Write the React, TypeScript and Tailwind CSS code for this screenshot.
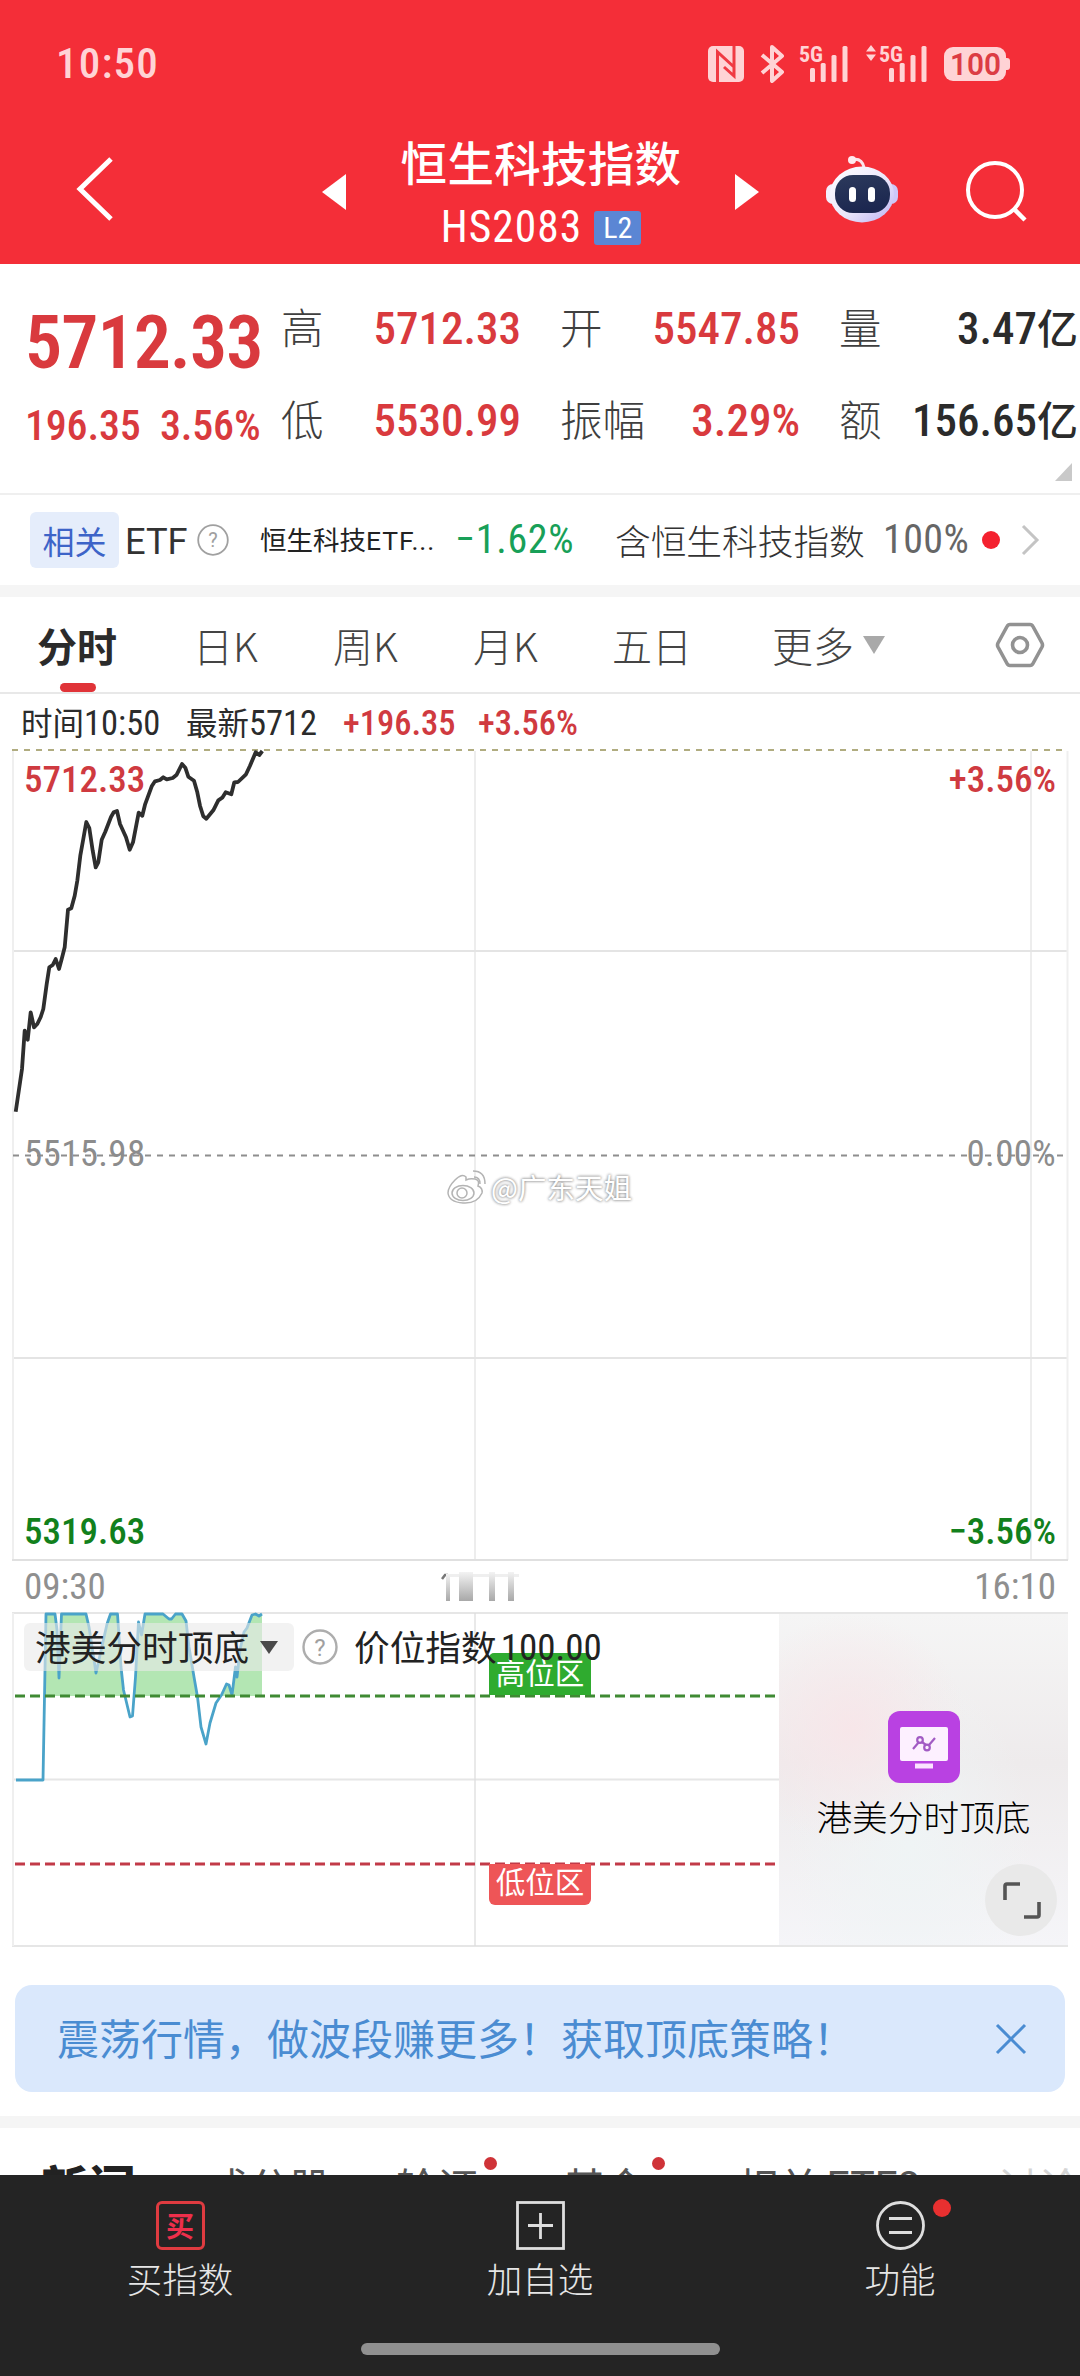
import React from 'react';

const PRICE_POINTS =
  '15.7,1112.7 22,1070 24.7,1031.7 27.7,1040.7 30.7,1013.3 34,1028.3 37.3,1025 40.7,1018 43.3,1010 46.7,985 49.3,968.3 52.7,966 55.7,960 59,970 61.7,960 64.7,948.3 68,910.7 71.3,909.3 74.7,896.7 77.3,881.7 80.3,856.7 83.3,840 86.3,823 89.3,829 92.7,851.7 95.7,868.3 98.3,863.3 101.7,840.7 105.3,832.7 111,818 113.7,813.3 117,812 120,825 126,838.3 129.7,850.7 133,843.3 138.7,813.7 142.3,816.7 145,805.7 151.7,787.3 155,782.3 160,781 163.3,778.3 166.7,780.3 172.7,779 176.7,775.7 182,765 185.3,768.7 188.3,777.7 194,781.7 197.3,793.3 200,806.7 203.3,817.3 206.3,819.7 213.3,811.3 218.3,801.3 222.3,798.7 225.7,793.3 231.3,795.3 234.3,783.3 238,783 246,775.3 250,766.7 255.7,753.3 259.3,756 262.3,752';

const INDEX_POINTS =
  '16,1780 43,1780 46,1614 55,1614 57,1630 59,1678 61,1627 61.5,1614 86,1614 89,1627 96,1673 107,1624 110.5,1614 117.5,1614 121,1667 123.5,1690 130,1717 132.5,1716 135.5,1677 138.5,1622 141.5,1635 145,1614 163,1614 169,1619 171.5,1619 175.5,1614 182,1614 186,1621 189,1647 194,1677 197.5,1697 201,1727 206,1744 210,1723 216,1703 221.5,1695 226.5,1684 229,1685 232,1695 235.5,1667 237,1677 240,1650 244,1632 247,1628 252,1615 255.5,1614 259,1616 262,1614';

const QUOTES = [
  [
    { label: '高', value: '5712.33', unit: '', up: true },
    { label: '低', value: '5530.99', unit: '', up: true },
  ],
  [
    { label: '开', value: '5547.85', unit: '', up: true },
    { label: '振幅', value: '3.29%', unit: '', up: true },
  ],
  [
    { label: '量', value: '3.47', unit: '亿', up: false },
    { label: '额', value: '156.65', unit: '亿', up: false },
  ],
];

const NEWS_TABS = [
  { name: '成分股', latin: '', width: 'w-[191px]', dot: false },
  { name: '轮证', latin: '', width: 'w-[170px]', dot: true },
  { name: '基金', latin: '', width: 'w-[176px]', dot: true },
  { name: '相关', latin: 'ETF8', width: 'w-[264px]', dot: false },
];

const SignalBars = () => (
  <svg width="38" height="38" viewBox="0 0 38 38" fill="#ffd3d5">
    <rect x="0" y="23" width="5" height="14" rx="1.5" />
    <rect x="10.7" y="18" width="5" height="19" rx="1.5" />
    <rect x="21.5" y="10" width="5" height="27" rx="1.5" />
    <rect x="32.5" y="1" width="5" height="36" rx="1.5" />
  </svg>
);

const StatusBar = () => (
  <div className="flex h-[127px] items-center text-[#ffd3d5]">
    <span className="ml-[56px] w-[652px] text-[43px] leading-none font-medium tracking-[1.2px] font-['Roboto_Condensed']">
      10:50
    </span>
    <svg width="36" height="36" viewBox="0 0 36 36">
      <rect width="36" height="36" rx="5" fill="#ffd3d5" />
      <path d="M9.5 36V6L26 21M26 0v30L16 21" fill="none" stroke="#f03a43" strokeWidth="3" />
    </svg>
    <svg className="ml-[16px]" width="26" height="38" viewBox="0 0 26 38">
      <path d="M2 10l20 17-10 9V2l10 9L2 28" fill="none" stroke="#ffd3d5" strokeWidth="4" strokeLinejoin="round" />
    </svg>
    <div className="relative ml-[24px] flex">
      <span className="absolute -top-[1px] -left-[11px] text-[22px] leading-none font-bold font-['Roboto_Condensed']">5G</span>
      <SignalBars />
    </div>
    <svg className="ml-[18px] mb-[22px]" width="10" height="16" viewBox="0 0 10 16" fill="#ffd3d5">
      <path d="M5 0l5 6.500H0zM5 16l5-6.500H0z" />
    </svg>
    <div className="relative ml-[13px] flex">
      <span className="absolute -top-[1px] -left-[10px] text-[22px] leading-none font-bold font-['Roboto_Condensed']">5G</span>
      <SignalBars />
    </div>
    <div className="ml-[17px] flex h-[34px] w-[62px] items-center justify-center rounded-[9px] bg-[#ffd3d5] text-[32px] leading-none font-semibold text-[#dc3c44] font-['Roboto']">
      <span className="scale-x-[0.93]">100</span>
    </div>
    <div className="h-[12px] w-[4px] rounded-r-[3px] bg-[#ffd3d5]" />
  </div>
);

const Robot = () => (
  <svg width="74" height="70" viewBox="0 0 74 70">
    <defs>
      <linearGradient id="shell" x1="0" y1="0" x2="1" y2="1">
        <stop offset="0" stopColor="#ffffff" />
        <stop offset="0.55" stopColor="#ebe7fb" />
        <stop offset="1" stopColor="#b9b0f2" />
      </linearGradient>
      <linearGradient id="visor" x1="0" y1="0" x2="0.3" y2="1">
        <stop offset="0" stopColor="#2c3a5c" />
        <stop offset="1" stopColor="#1c2750" />
      </linearGradient>
    </defs>
    <path d="M27 4.500q10-2 12 8" fill="none" stroke="#fbe3ea" strokeWidth="3" />
    <circle cx="27" cy="5" r="4" fill="#ffe9ee" />
    <rect x="1" y="29" width="14" height="20" rx="7" fill="#f3effd" />
    <rect x="59" y="29" width="14" height="20" rx="7" fill="#cdc7f8" />
    <ellipse cx="37" cy="39.500" rx="32" ry="28" fill="url(#shell)" />
    <rect x="10" y="20" width="55" height="38" rx="18" fill="url(#visor)" />
    <rect x="24" y="32" width="7" height="15" rx="3.5" fill="#fff" />
    <rect x="43" y="32" width="7" height="15" rx="3.5" fill="#fff" />
  </svg>
);

const Header = () => (
  <div className="flex h-[137px] text-white">
    <svg className="mt-[30px] ml-[76px]" width="38" height="64" viewBox="0 0 38 64">
      <path d="M35 2L4 32l31 30" fill="none" stroke="#fff" strokeWidth="5" />
    </svg>
    <svg className="mt-[47px] ml-[208px]" width="25" height="36" viewBox="0 0 25 36">
      <path d="M24 0v36L0 18z" fill="#fff" />
    </svg>
    <div className="flex w-[388px] flex-col items-center">
      <span className="mt-[6px] text-[46.5px] leading-[56px] font-medium tracking-[0.3px]">恒生科技指数</span>
      <div className="mt-[15px] flex items-center gap-[12px]">
        <span className="text-[43.5px] leading-[48px] tracking-[1px] font-['Roboto_Condensed']">HS2083</span>
        <span className="flex h-[34px] w-[47px] items-center justify-center rounded-[3px] bg-[#5b86d4] text-[30px] leading-none font-['Roboto_Condensed']">
          L2
        </span>
      </div>
    </div>
    <svg className="mt-[47px]" width="25" height="36" viewBox="0 0 25 36">
      <path d="M0 0v36l24-18z" fill="#fff" />
    </svg>
    <div className="mt-[28px] ml-[65px]">
      <Robot />
    </div>
    <svg className="mt-[32px] ml-[66px]" width="64" height="64" viewBox="0 0 64 64">
      <circle cx="30" cy="31" r="27" fill="none" stroke="#fff" strokeWidth="4" />
      <path d="M49 50l11 11" stroke="#fff" strokeWidth="4.500" />
    </svg>
  </div>
);

const QuotePanel = () => (
  <div className="relative flex h-[231px] border-b-2 border-[#efefef] font-medium text-[#d93a3e] font-['Roboto_Condensed','Noto_Sans_CJK_SC',sans-serif]">
    <div className="w-[281px] pl-[25px]">
      <div className="mt-[39px] h-[80px] text-[74px] leading-[80px] font-semibold tracking-[-1px]">5712.33</div>
      <div className="mt-[15px] flex h-[56px] gap-[25px] text-[42px] leading-[56px] tracking-[-0.2px] whitespace-nowrap">
        <span className="w-[110px]">196.35</span>
        <span>3.56%</span>
      </div>
    </div>
    <div className="flex gap-[39px] pt-[36px]">
      {QUOTES.map((col, i) => (
        <div key={i} className="flex w-[240px] flex-col gap-[36px] last:w-[239px]">
          {col.map(q => (
            <div key={q.label} className="flex h-[56px] justify-between text-[45px] leading-[56px] whitespace-nowrap">
              <span className="-mt-[2px] text-[42.5px] font-light text-[#3f3f3f] font-['Noto_Sans_CJK_SC']">{q.label}</span>
              <span className={q.up ? 'pt-[1px]' : 'pt-[1px] text-[#2b2b2b]'}>
                {q.value}
                {q.unit && <span className="text-[41px] leading-none">{q.unit}</span>}
              </span>
            </div>
          ))}
        </div>
      ))}
    </div>
    <svg className="absolute right-[8px] bottom-[12px]" width="17" height="18" viewBox="0 0 17 18">
      <path d="M17 0v18H0z" fill="#c9c9c9" />
    </svg>
  </div>
);

const EtfRow = () => (
  <div className="flex h-[91px] items-center pl-[30px] whitespace-nowrap">
    <span className="flex h-[56px] w-[89px] items-center justify-center rounded-[6px] bg-[#e5edfb] text-[32px] leading-none text-[#3d64c8]">
      相关
    </span>
    <span className="ml-[6px] w-[71px] pt-[3px] text-[37px] text-[#333] font-['Roboto']">
      <span className="inline-block origin-left scale-x-[0.98]">ETF</span>
    </span>
    <svg className="ml-[1px]" width="32" height="32" viewBox="0 0 32 32">
      <circle cx="16" cy="16" r="14.800" fill="none" stroke="#a0a0a0" strokeWidth="1.800" />
      <text x="16" y="23" textAnchor="middle" fontSize="20" fill="#a0a0a0" fontFamily="Roboto">?</text>
    </svg>
    <span className="ml-[31px] w-[195px] text-[26.5px] text-[#222]">
      恒生科技<span className="tracking-[0.9px] font-['Roboto']">ETF...</span>
    </span>
    <span className="w-[160px] text-[40px] tracking-[0.7px] text-[#18a058] font-['Roboto_Condensed']">−1.62%</span>
    <span className="w-[268px] text-[35.7px] font-light text-[#333]">含恒生科技指数</span>
    <span className="w-[99px] text-[40px] tracking-[0.4px] text-[#666] font-['Roboto_Condensed']">100%</span>
    <span className="size-[18px] shrink-0 rounded-full bg-[#f4212f]" />
    <svg className="ml-[20px]" width="20" height="32" viewBox="0 0 20 32">
      <path d="M3 2l14 14L3 30" fill="none" stroke="#c4c4c4" strokeWidth="3" />
    </svg>
  </div>
);

const PeriodTabs = () => (
  <div className="relative flex h-[97px] items-center border-b-2 border-[#e8e8e8] pl-[37px] text-[39px] font-light whitespace-nowrap text-[#444]">
    <span className="w-[156px] text-[40px] font-bold text-[#2b2b2b]">分时</span>
    <span className="w-[140px] text-[40px]">日K</span>
    <span className="w-[140px] text-[40px]">周K</span>
    <span className="w-[139px] text-[40px]">月K</span>
    <span className="w-[160px] text-[40px]">五日</span>
    <span className="w-[90px] text-[41px]">更多</span>
    <svg width="24" height="18" viewBox="0 0 24 18">
      <path d="M1 0h22L12 18z" fill="#a9a9a9" />
    </svg>
    <svg className="ml-[109px]" width="50" height="46" viewBox="0 0 50 46">
      <path
        d="M15 2.500h20q2 0 3 2l9 16.500q1 2 0 4L38 41.500q-1 2-3 2H15q-2 0-3-2L3 25q-1-2 0-4L12 4.500q1-2 3-2z"
        fill="none"
        stroke="#929292"
        strokeWidth="3.600"
      />
      <circle cx="25" cy="23" r="7.500" fill="none" stroke="#929292" strokeWidth="3.600" />
    </svg>
    <div className="absolute bottom-0 left-[60px] h-[9px] w-[36px] rounded-full bg-[#e03338]" />
  </div>
);

const PriceChart = () => (
  <div className="relative h-[918px] font-['Roboto_Condensed','Noto_Sans_CJK_SC',sans-serif]">
    <div className="flex h-[56px] items-center pt-[4px] pl-[21px] text-[34.5px] whitespace-nowrap text-[#2b2b2b]">
      <span className="w-[165px]">
        <span className="text-[31.5px]">时间</span>10:50
      </span>
      <span className="w-[157px]">
        <span className="text-[31.5px]">最新</span>5712
      </span>
      <span className="w-[135px] font-medium text-[#d03a40]">+196.35</span>
      <span className="font-medium text-[#d03a40]">+3.56%</span>
    </div>
    {/* y axis runs from the day's band high to band low */}
    <svg className="absolute top-[54px] left-0" width="1080" height="812" viewBox="0 749 1080 812">
      <g stroke="#e4e4e4" strokeWidth="2">
        <path d="M13 952h1054M13 1359h1054" />
        <path d="M475 752v810M1031 752v810" strokeWidth="1.300" />
        <path d="M13 752v810M1067.500 752v810" stroke="#efefef" />
      </g>
      <path d="M12 751h1052" stroke="#b0ac80" strokeWidth="2" strokeDasharray="6 6" />
      <path d="M13 1156.500h1050" stroke="#8e8e8e" strokeWidth="2.200" strokeDasharray="6 6" />
      <polyline points={PRICE_POINTS} fill="none" stroke="#2e2e2e" strokeWidth="3.800" strokeLinejoin="round" />
    </svg>
    <div className="relative mx-[12px] flex h-[811px] flex-col justify-between border-b-2 border-[#e0e0e0] px-[12px] pt-[2px] text-[37px] leading-[56px]">
      <div className="flex justify-between font-medium text-[#cf3a40]">
        <span>5712.33</span>
        <span>+3.56%</span>
      </div>
      <div className="-mt-[4px] flex justify-between tracking-[0.3px] text-[#8c8c8c]">
        <span>5515.98</span>
        <span>0.00%</span>
      </div>
      <div className="-mb-[1px] flex justify-between font-medium text-[#12801c]">
        <span>5319.63</span>
        <span>−3.56%</span>
      </div>
    </div>
    <div className="mx-[12px] flex h-[51px] items-center justify-between px-[12px] text-[37px] text-[#8f8f8f]">
      <span>09:30</span>
      <svg className="mr-[114px] -mt-[2px]" width="84" height="30" viewBox="0 0 84 30">
        <defs>
          <linearGradient id="smear" x1="0" y1="0" x2="0" y2="1">
            <stop offset="0" stopColor="#f3f3f3" />
            <stop offset="1" stopColor="#a8a8a8" />
          </linearGradient>
        </defs>
        <path d="M1 8l3-4h3" fill="none" stroke="#777" strokeWidth="2.500" />
        <path d="M6 4.500h72" stroke="#efefef" strokeWidth="3" />
        <g fill="url(#smear)">
          <rect x="5" y="3" width="4" height="27" />
          <rect x="18" y="1" width="14" height="29" />
          <rect x="48" y="1" width="6" height="29" />
          <rect x="67" y="1" width="6" height="29" />
        </g>
      </svg>
      <span>16:10</span>
    </div>
    <div className="absolute top-[471px] left-[446px] flex h-[44px] items-center gap-[3px]">
      <svg width="42" height="38" viewBox="0 0 42 38" fill="#fff" stroke="#b4b4b4" strokeWidth="1.500">
        <path d="M20 9q-4-4-11 3T2 25q1 9 15 10t19-10q1-5-4-7 2-6-3-7t-9 1z" />
        <ellipse cx="17" cy="25" rx="11" ry="7.500" />
        <circle cx="16" cy="25" r="5" />
        <path d="M27 3q12 0 12 13M28 9q6 0 6 7" fill="none" />
      </svg>
      <span className="text-[28.5px] text-white [text-shadow:0_0_3px_#8f8f8f,0_0_3px_#a5a5a5] font-['Noto_Sans_CJK_SC']">
        @广东天姐
      </span>
    </div>
  </div>
);

const IndexChart = () => (
  <div className="mx-[12px] flex h-[335px] border-y-2 border-[#e6e6e6]">
    <div className="relative w-[767px]">
      <svg className="absolute top-[-2px] left-0" width="767" height="334" viewBox="12 1612 767 334">
        <defs>
          <clipPath id="high-zone">
            <rect x="12" y="1612" width="767" height="84" />
          </clipPath>
        </defs>
        <path d="M12 1779.500h767" stroke="#e6e6e6" strokeWidth="2" />
        <path d="M475 1613v333" stroke="#dedede" strokeWidth="1.300" />
        <path d="M13 1613v333" stroke="#efefef" strokeWidth="2" />
        <polygon
          points={INDEX_POINTS + ' 262,1696 44,1696 44,1780'}
          fill="#b3e6b3"
          clipPath="url(#high-zone)"
        />
        <polyline points={INDEX_POINTS} fill="none" stroke="#4aa3c9" strokeWidth="2.800" strokeLinejoin="round" />
        <path d="M15 1696h764" stroke="#3f8a33" strokeWidth="3" strokeDasharray="10 5" />
        <path d="M15 1864h764" stroke="#c23a48" strokeWidth="3" strokeDasharray="10 5" />
      </svg>
      <div className="absolute top-[39px] left-[477px] flex h-[42px] w-[102px] items-center justify-center rounded-t-[5px] bg-[#2fab2f] pb-[5px] text-[29.5px] leading-none text-white">
        高位区
      </div>
      <div className="absolute top-[250px] left-[477px] flex h-[41px] w-[102px] items-center justify-center rounded-b-[6px] bg-[#ee5557] pb-[7px] text-[29.5px] leading-none text-white">
        低位区
      </div>
      <div className="relative mt-[9px] flex h-[48px] items-center pl-[12px] whitespace-nowrap text-[#222]">
        <div className="flex h-[48px] w-[270px] items-center gap-[11px] rounded-[6px] bg-[#e9e9e9]/60 pl-[11px] text-[35.7px] leading-none">
          <span className="pb-[3px]">港美分时顶底</span>
          <svg width="18" height="13" viewBox="0 0 18 13">
            <path d="M0 0h18L9 13z" fill="#4a4a4a" />
          </svg>
        </div>
        <svg className="ml-[8px]" width="36" height="36" viewBox="0 0 36 36">
          <circle cx="18" cy="18" r="16.500" fill="none" stroke="#adadad" strokeWidth="2.400" />
          <text x="18" y="26.500" textAnchor="middle" fontSize="24" fill="#a0a0a0" fontFamily="Roboto">?</text>
        </svg>
        <span className="ml-[16px] pb-[3px] text-[35.7px] leading-none">价位指数</span>
        <span className="ml-[4px] text-[37px] leading-none font-['Roboto_Condensed']">100.00</span>
      </div>
    </div>
    <div className="relative flex flex-1 flex-col items-center bg-linear-to-b from-[#f5f5f5] via-[#eeebec] via-45% to-[#f5f5f8]">
      <div className="absolute inset-0 bg-[radial-gradient(ellipse_at_25%_35%,#f7e6e9_0%,transparent_38%),radial-gradient(ellipse_at_45%_70%,#eff4f5_0%,transparent_55%)]" />
      <svg className="relative mt-[97px]" width="72" height="72" viewBox="0 0 72 72">
        <rect width="72" height="72" rx="12" fill="#b941e2" />
        <rect x="12" y="16" width="48" height="34" rx="2" fill="#fdf0ff" />
        <rect x="27" y="52.500" width="18" height="5" fill="#fbe2ff" />
        <g fill="none" stroke="#a25bc4" strokeWidth="2.200">
          <path d="M25 38l6-7M34 31l4 3M41 34l6-7" />
          <circle cx="32" cy="29" r="2.800" />
          <circle cx="39" cy="36.500" r="2.800" />
        </g>
      </svg>
      <span className="relative mt-[7px] text-[35.700px] leading-[52px] font-light text-black">港美分时顶底</span>
      <div className="absolute right-[11px] bottom-[9px] flex size-[72px] items-center justify-center rounded-full bg-[#e9e9e9]">
        <svg width="40" height="40" viewBox="0 0 40 40" fill="none" stroke="#555" strokeWidth="3.600">
          <path d="M4 20V6q0-2 2-2h13M38 22v13q0 2-2 2H23" />
        </svg>
      </div>
    </div>
  </div>
);

const PromoBanner = () => (
  <div className="mx-[15px] mt-[38px] flex h-[108px] items-center justify-between rounded-[17px] bg-[#dae8fc] pr-[37px] pl-[42px] text-[#4a8cd2]">
    <span className="pb-[5px] text-[42px]">震荡行情，做波段赚更多！获取顶底策略！</span>
    <svg width="34" height="34" viewBox="0 0 34 34">
      <path d="M3 3l28 28M31 3L3 31" stroke="#4a8cd2" strokeWidth="3" />
    </svg>
  </div>
);

// only the upper edge of these tabs shows above the bottom bar
const NewsTabs = () => (
  <div className="flex h-[47px] items-start overflow-hidden pt-[31px] pl-[41px] text-[41px] leading-[52px] whitespace-nowrap text-[#555]">
    <span className="w-[169px] text-[47px] font-black text-[#222]">新闻</span>
    {NEWS_TABS.map(t => (
      <span key={t.name} className={`relative ${t.width}`}>
        {t.name}
        {t.latin && <span className="relative -top-[3px] ml-[7px] font-['Roboto']">{t.latin}</span>}
        {t.dot && <i className="absolute -top-[2px] left-[88px] size-[13px] rounded-full bg-[#cf3338]" />}
      </span>
    ))}
    <span className="text-[#d5d5d5]">讨论</span>
  </div>
);

const BottomNav = () => (
  <div className="flex h-[201px] flex-col items-center bg-[#242424] text-[35.500px] leading-[50px] font-light text-[#e6e6e6]">
    <div className="grid w-full grid-cols-3 pt-[26px]">
      <div className="flex flex-col items-center gap-[3px]">
        <span className="flex size-[49px] items-center justify-center rounded-[6px] border-3 border-[#df3b40] pb-[2px] text-[28px] leading-none font-bold text-[#ee2f4b]">
          买
        </span>
        买指数
      </div>
      <div className="flex flex-col items-center gap-[3px]">
        <svg width="49" height="49" viewBox="0 0 49 49" fill="none" stroke="#dedede" strokeWidth="2.800">
          <rect x="1.500" y="1.500" width="46" height="46" />
          <path d="M24.500 12v26M12 24.500h25" />
        </svg>
        加自选
      </div>
      <div className="relative flex flex-col items-center gap-[3px]">
        <svg width="51" height="49" viewBox="0 0 51 49" fill="none" stroke="#dedede" strokeWidth="2.800">
          <circle cx="25.500" cy="24.500" r="23" />
          <path d="M14 17.500h23M14 31.500h23" />
        </svg>
        <i className="absolute -top-[2px] right-[129px] size-[18px] rounded-full bg-[#e83030]" />
        功能
      </div>
    </div>
    <div className="mt-[40px] h-[12px] w-[359px] rounded-full bg-[#909090]" />
  </div>
);

export default function App() {
  return (
    <div className="flex h-[2376px] w-[1080px] flex-col overflow-hidden bg-white font-['Noto_Sans_CJK_SC',sans-serif]">
      <div className="bg-[#f42e38]">
        <StatusBar />
        <Header />
      </div>
      <QuotePanel />
      <EtfRow />
      <div className="h-[12px] bg-[#f5f5f5]" />
      <PeriodTabs />
      <PriceChart />
      <IndexChart />
      <PromoBanner />
      <div className="mt-[24px] h-[12px] bg-[#f5f5f5]" />
      <NewsTabs />
      <BottomNav />
    </div>
  );
}
